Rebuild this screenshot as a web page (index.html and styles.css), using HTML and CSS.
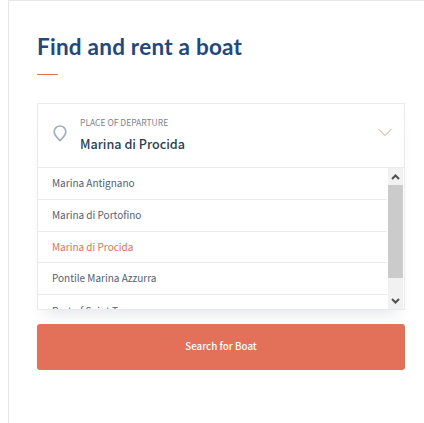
FILE: index.html
```html
<!DOCTYPE html>
<html lang="en">
<head>
  <meta charset="UTF-8">
  <meta name="viewport" content="width=device-width, initial-scale=1.0">
  <title>Find and rent a boat</title>
  <link rel="stylesheet" href="styles.css">
</head>
<body>
  <div class="card">
    <h2 class="title">Find and rent a boat</h2>
    <div class="title-line"></div>

    <div class="select">
      <div class="select-head">
        <svg class="pin" width="14" height="17" viewBox="0 0 14 17">
          <path d="M7 15.6C5.2 13.8 1.2 10.4 1.2 6.8a5.8 5.8 0 0 1 11.6 0C12.8 10.4 8.800 13.8 7 15.6z" />
        </svg>
        <div class="select-text">
          <div class="label">PLACE OF DEPARTURE</div>
          <div class="value">Marina di Procida</div>
        </div>
        <svg class="chevron" width="14" height="9" viewBox="0 0 14 9">
          <path d="M.5 1L7 7.500 13.500 1" />
        </svg>
      </div>
      <div class="dropdown">
        <ul class="options">
          <li>Marina Antignano</li>
          <li>Marina di Portofino</li>
          <li class="active">Marina di Procida</li>
          <li>Pontile Marina Azzurra</li>
          <li>Port of Saint Tropez</li>
        </ul>
        <div class="scrollbar">
          <svg class="arrow" width="9" height="6" viewBox="0 0 9 6"><path d="M1 5l3.500-3.500L8 5" /></svg>
          <div class="thumb"></div>
          <svg class="arrow" width="9" height="6" viewBox="0 0 9 6"><path d="M1 1l3.500 3.500L8 1" /></svg>
        </div>
      </div>
    </div>

    <button class="search">Search for Boat</button>
  </div>
</body>
</html>
```

FILE: styles.css
```css
body {
  margin: 0;
  height: 423px;
  overflow: hidden;
  background: #fff;
  font-family: "Noto Sans CJK JP", "Noto Sans", sans-serif;
}
.card {
  box-sizing: border-box;
  height: 440px;
  margin-left: 8px;
  padding: 30px 19px 0 28px;
  border-left: 1px solid #e6e7ea;
  border-top: 1px solid #e6e7ea;
}
.title {
  margin: 0;
  font-family: Lato, sans-serif;
  font-size: 22.5px;
  font-weight: 700;
  line-height: 32px;
  letter-spacing: 0.24px;
  color: #24487c;
  white-space: nowrap;
}
.title-line {
  width: 21px;
  height: 1px;
  margin-top: 11px;
  background: #e37059;
}
.select {
  box-sizing: border-box;
  height: 207px;
  margin-top: 28px;
  border: 1px solid #e9eaed;
  box-shadow: 0 12px 14px -8px rgba(40, 60, 110, 0.13);
}
.select-head {
  display: flex;
  align-items: center;
  box-sizing: border-box;
  height: 64px;
  padding: 0 12px 0 14.5px;
  border-bottom: 1px solid #e9eaed;
}
.pin {
  margin-top: -4px;
  fill: none;
  stroke: #a6abc3;
  stroke-width: 1.7;
}
.select-text {
  flex: 1;
  margin: -2px 0 0 13.5px;
}
.label {
  font-size: 8.5px;
  line-height: 14px;
  color: #7c828b;
}
.value {
  margin-top: 5px;
  font-size: 12.6px;
  font-weight: 500;
  line-height: 20px;
  color: #2b3f54;
}
.chevron {
  margin-top: -6px;
  fill: none;
  stroke: #d49a98;
  stroke-width: 1;
}
.dropdown {
  display: flex;
  height: 141px;
  overflow: hidden;
  background: #fff;
}
.options {
  flex: 1;
  margin: 0;
  padding: 0;
  list-style: none;
}
.options li {
  box-sizing: border-box;
  height: 31.8px;
  padding-left: 14px;
  border-bottom: 1px solid #e9eaed;
  font-size: 10px;
  line-height: 30px;
  color: #536073;
}
.options li:last-child {
  padding-top: 1px;
}
.options .active {
  color: #e37059;
}
.scrollbar {
  display: flex;
  flex-direction: column;
  align-items: center;
  width: 15px;
  margin: 0 1px;
  background: #f1f1f1;
}
.arrow {
  margin: 6px 0 5px;
  fill: none;
  stroke: #505050;
  stroke-width: 2;
}
.thumb {
  width: 15px;
  height: 93px;
  margin-bottom: 14px;
  background: #cbcbcb;
}
.search {
  display: block;
  width: 100%;
  height: 46px;
  margin-top: 14px;
  padding: 0 0 2px;
  border: 0;
  border-radius: 3px;
  background: #e37059;
  color: #fff;
  font-family: inherit;
  font-size: 9.8px;
  font-weight: 500;
}
```
